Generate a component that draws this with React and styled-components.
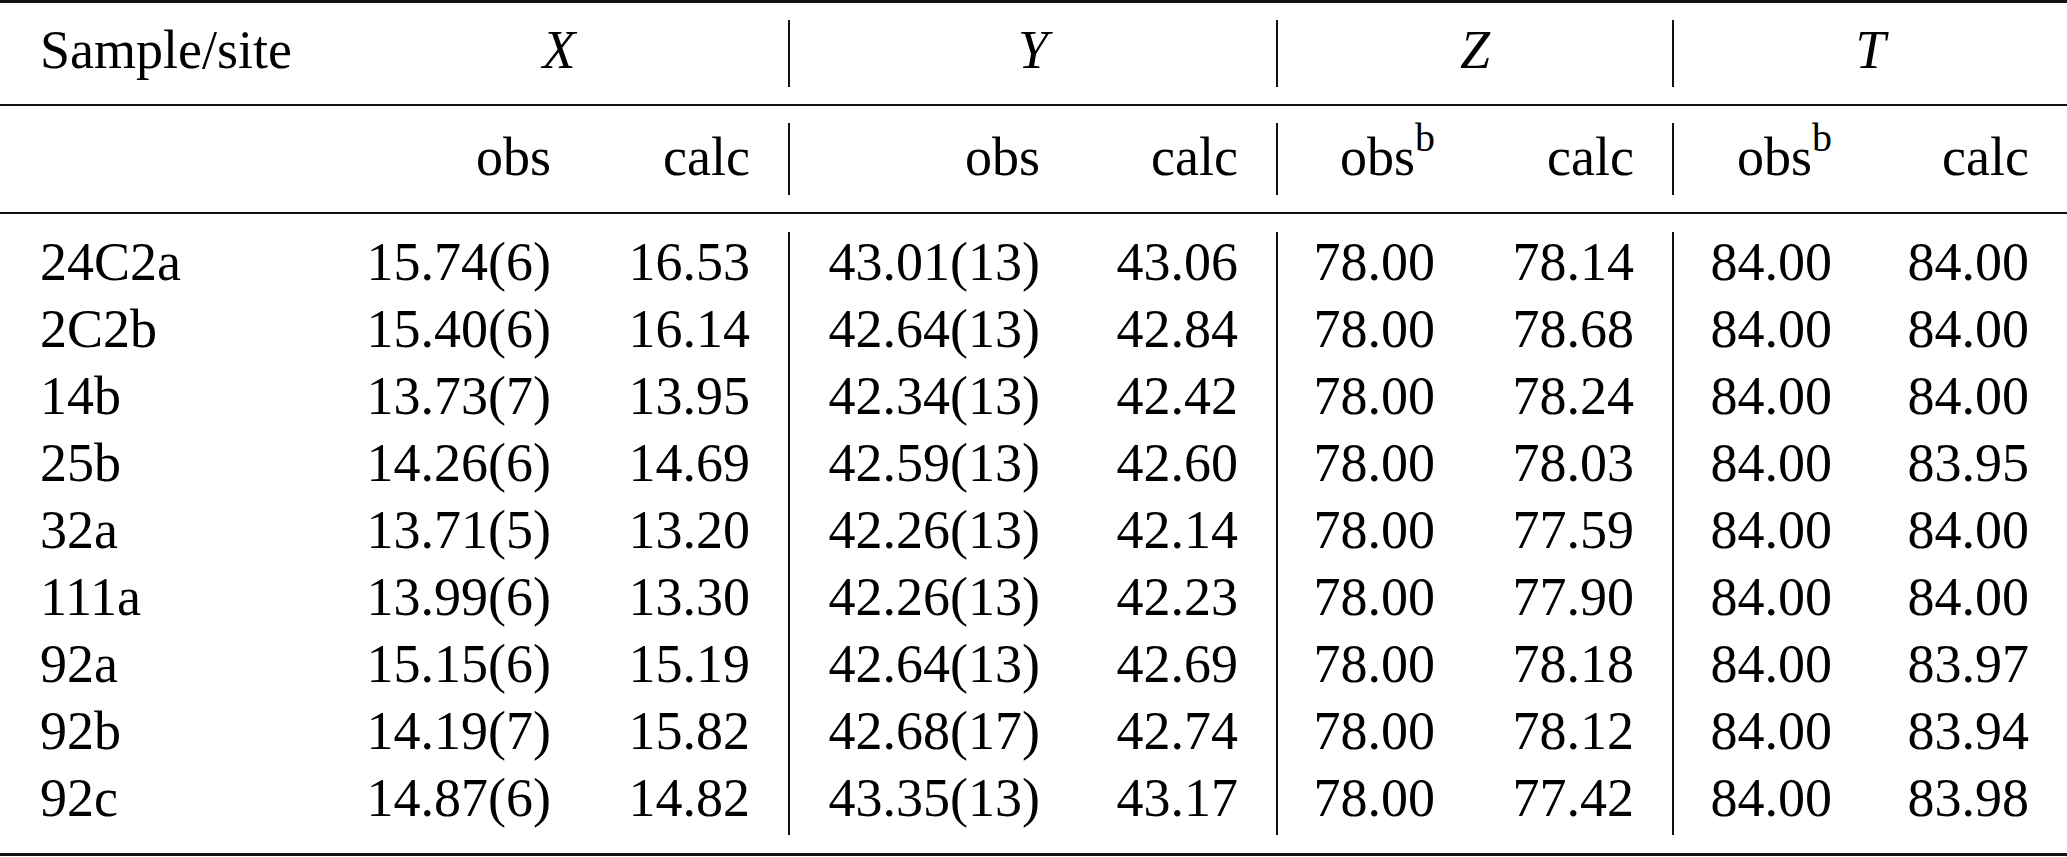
import React from "react";
import styled, { createGlobalStyle } from "styled-components";

const COLS = "330px 259px 199px 290px 198px 197px 199px 198px 197px";

const rows = [
  ["24C2a", "15.74(6)", "16.53", "43.01(13)", "43.06", "78.00", "78.14", "84.00", "84.00"],
  ["2C2b", "15.40(6)", "16.14", "42.64(13)", "42.84", "78.00", "78.68", "84.00", "84.00"],
  ["14b", "13.73(7)", "13.95", "42.34(13)", "42.42", "78.00", "78.24", "84.00", "84.00"],
  ["25b", "14.26(6)", "14.69", "42.59(13)", "42.60", "78.00", "78.03", "84.00", "83.95"],
  ["32a", "13.71(5)", "13.20", "42.26(13)", "42.14", "78.00", "77.59", "84.00", "84.00"],
  ["111a", "13.99(6)", "13.30", "42.26(13)", "42.23", "78.00", "77.90", "84.00", "84.00"],
  ["92a", "15.15(6)", "15.19", "42.64(13)", "42.69", "78.00", "78.18", "84.00", "83.97"],
  ["92b", "14.19(7)", "15.82", "42.68(17)", "42.74", "78.00", "78.12", "84.00", "83.94"],
  ["92c", "14.87(6)", "14.82", "43.35(13)", "43.17", "78.00", "77.42", "84.00", "83.98"],
];

const groups = ["X", "Y", "Z", "T"];
const subHeads = [
  { label: "obs" },
  { label: "calc" },
  { label: "obs" },
  { label: "calc" },
  { label: "obs", note: "b" },
  { label: "calc" },
  { label: "obs", note: "b" },
  { label: "calc" },
];

// columns that open a new group get the vertical divider
const dividerAt = (i) => i === 3 || i === 5 || i === 7;

const App = () => {
  return (
    <>
      <GlobalStyle />
      <Table>
        <Rule $weight={3} />
        <Section $pad={17}>
          <Grid>
            <Cell $align="left" $h={67}>Sample/site</Cell>
            {groups.map((g, i) => (
              <GroupCell key={g} $divider={i > 0}>
                <Var>{g}</Var>
              </GroupCell>
            ))}
          </Grid>
        </Section>
        <Rule $weight={2} />
        <Section $pad={17}>
          <Grid>
            <Cell $align="left" $h={72} $top={4} />
            {subHeads.map((s, i) => (
              <Cell key={i} $h={72} $top={4} $divider={dividerAt(i + 1)}>
                {s.label}
                {s.note && <Sup>{s.note}</Sup>}
              </Cell>
            ))}
          </Grid>
        </Section>
        <Rule $weight={2} />
        <Section $pad={18}>
          <Grid>
            {rows.map((row) =>
              row.map((v, i) => (
                <Cell
                  key={row[0] + i}
                  $align={i === 0 ? "left" : "right"}
                  $h={67}
                  $divider={dividerAt(i)}
                >
                  {v}
                </Cell>
              ))
            )}
          </Grid>
        </Section>
        <Rule $weight={3} />
      </Table>
    </>
  );
};

const GlobalStyle = createGlobalStyle`
  html, body {
    margin: 0;
    padding: 0;
    background: #ffffff;
  }
  * {
    box-sizing: border-box;
  }
`;

const Table = styled.div`
  width: 2067px;
  font-family: "Liberation Serif", "Times New Roman", serif;
  font-size: 54px;
  color: #000;
`;

const Rule = styled.div`
  height: ${({ $weight }) => $weight}px;
  background: #111;
`;

const Section = styled.div`
  padding: ${({ $pad }) => $pad}px 0;
`;

const Grid = styled.div`
  display: grid;
  grid-template-columns: ${COLS};
`;

const Cell = styled.div`
  height: ${({ $h }) => $h}px;
  line-height: 60px;
  padding-top: ${({ $top }) => $top || 0}px;
  padding-left: ${({ $align }) => ($align === "left" ? "40px" : "0")};
  padding-right: ${({ $align }) => ($align === "left" ? "0" : "38px")};
  text-align: ${({ $align }) => $align || "right"};
  white-space: nowrap;
  border-left: ${({ $divider }) => ($divider ? "2px solid #111" : "none")};
`;

const GroupCell = styled.div`
  grid-column: span 2;
  height: 67px;
  line-height: 60px;
  text-align: center;
  border-left: ${({ $divider }) => ($divider ? "2px solid #111" : "none")};
`;

const Var = styled.span`
  font-style: italic;
`;

const Sup = styled.sup`
  font-size: 0.74em;
  line-height: 0;
  vertical-align: 0.6em;
`;

export default App;
